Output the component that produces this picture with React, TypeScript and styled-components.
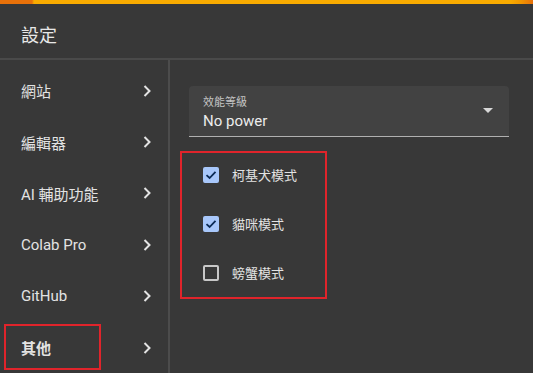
import { FC } from "react";
import styled, { createGlobalStyle } from "styled-components";

const GlobalStyle = createGlobalStyle`
  html, body {
    margin: 0;
    padding: 0;
    background: #383838;
  }
  body {
    font-family: Roboto, "Noto Sans CJK TC", "Noto Sans", sans-serif;
    color: #e3e3e3;
  }
`;

const Dialog = styled.div`
  width: 533px;
  height: 373px;
  background: #383838;
  display: flex;
  flex-direction: column;
  overflow: hidden;
`;

const TopStripe = styled.div`
  height: 4px;
  flex: none;
  background: linear-gradient(
    to right,
    #e8710a 0,
    #e8710a 32px,
    #f9ab00 34px,
    #f9ab00 510px,
    #f29900 520px,
    #e8710a 533px
  );
`;

const Header = styled.h2`
  margin: 0;
  height: 56px;
  flex: none;
  padding: 6px 21px 0;
  display: flex;
  align-items: center;
  font-size: 18px;
  font-weight: 400;
  color: #e8e8e8;
  border-bottom: 2px solid #4a4a4a;
  box-sizing: border-box;
`;

const Body = styled.div`
  flex: 1;
  display: flex;
  min-height: 0;
`;

const Sidebar = styled.nav`
  width: 168px;
  flex: none;
  border-right: 2px solid #4c4c4c;
  padding-top: 5px;
  display: flex;
  flex-direction: column;
`;

const NavItem = styled.div<{ $marked?: boolean }>`
  position: relative;
  height: 51.4px;
  flex: none;
  display: flex;
  align-items: center;
  justify-content: space-between;
  padding: 0 14px 0 21px;
  font-size: 15px;
  font-weight: ${(p) => (p.$marked ? 700 : 400)};
  color: #e3e3e3;
`;

const Highlight = styled.span<{ $w: number; $h: number; $l: number; $t: number }>`
  position: absolute;
  left: ${(p) => p.$l}px;
  top: ${(p) => p.$t}px;
  width: ${(p) => p.$w}px;
  height: ${(p) => p.$h}px;
  border: 2px solid #e0242b;
  box-sizing: border-box;
  pointer-events: none;
`;

const Chevron: FC = () => (
  <svg width="14" height="14" viewBox="0 0 14 14">
    <path d="M4.5 2 L9.5 7 L4.5 12" fill="none" stroke="#e3e3e3" strokeWidth="2" />
  </svg>
);

const Content = styled.section`
  position: relative;
  flex: 1;
  padding: 26px 24px 0 19px;
  display: flex;
  flex-direction: column;
`;

const Select = styled.div`
  height: 51px;
  background: #424242;
  border-radius: 4px 4px 0 0;
  border-bottom: 1px solid #b0b0b0;
  box-sizing: border-box;
  padding: 10px 16px 0 14px;
  display: flex;
  align-items: center;
  justify-content: space-between;
`;

const SelectText = styled.div`
  display: flex;
  flex-direction: column;
  align-self: flex-start;
`;

const SelectLabel = styled.span`
  font-size: 11px;
  color: #c4c4c4;
  line-height: 14px;
`;

const SelectValue = styled.span`
  font-size: 15px;
  color: #ececec;
  line-height: 22px;
`;

const Caret = styled.span`
  width: 0;
  height: 0;
  border-left: 5px solid transparent;
  border-right: 5px solid transparent;
  border-top: 5px solid #d8d8d8;
  margin-top: -12px;
`;

const Options = styled.div`
  position: relative;
  margin-top: 13px;
  padding-left: 14px;
  display: flex;
  flex-direction: column;
`;

const Option = styled.label`
  height: 49px;
  display: flex;
  align-items: center;
  gap: 13px;
  font-size: 13px;
  color: #e3e3e3;
`;

const Box = styled.span<{ $checked?: boolean }>`
  width: 16px;
  height: 16px;
  box-sizing: border-box;
  border-radius: 2px;
  border: 2px solid ${(p) => (p.$checked ? "#a8c7fa" : "#c8c8c8")};
  background: ${(p) => (p.$checked ? "#a8c7fa" : "transparent")};
  display: flex;
  align-items: center;
  justify-content: center;
`;

const Check: FC = () => (
  <svg width="12" height="12" viewBox="0 0 12 12">
    <path d="M1.5 6.2 L4.6 9 L10.5 2.8" fill="none" stroke="#0b2a55" strokeWidth="1.8" />
  </svg>
);

const navItems = ["網站", "編輯器", "AI 輔助功能", "Colab Pro", "GitHub", "其他"];

const options = [
  { label: "柯基犬模式", checked: true },
  { label: "貓咪模式", checked: true },
  { label: "螃蟹模式", checked: false },
];

const App: FC = () => {
  return (
    <>
      <GlobalStyle />
      <Dialog>
        <TopStripe />
        <Header>設定</Header>
        <Body>
          <Sidebar>
            {navItems.map((item, i) => {
              const marked = i === navItems.length - 1;
              return (
                <NavItem key={item} $marked={marked}>
                  <span>{item}</span>
                  <Chevron />
                  {marked && <Highlight $l={4} $t={2} $w={97} $h={46} />}
                </NavItem>
              );
            })}
          </Sidebar>
          <Content>
            <Select>
              <SelectText>
                <SelectLabel>效能等級</SelectLabel>
                <SelectValue>No power</SelectValue>
              </SelectText>
              <Caret />
            </Select>
            <Options>
              {options.map((o) => (
                <Option key={o.label}>
                  <Box $checked={o.checked}>{o.checked && <Check />}</Box>
                  {o.label}
                </Option>
              ))}
              <Highlight $l={-9} $t={1} $w={147} $h={148} />
            </Options>
          </Content>
        </Body>
      </Dialog>
    </>
  );
};

export default App;
